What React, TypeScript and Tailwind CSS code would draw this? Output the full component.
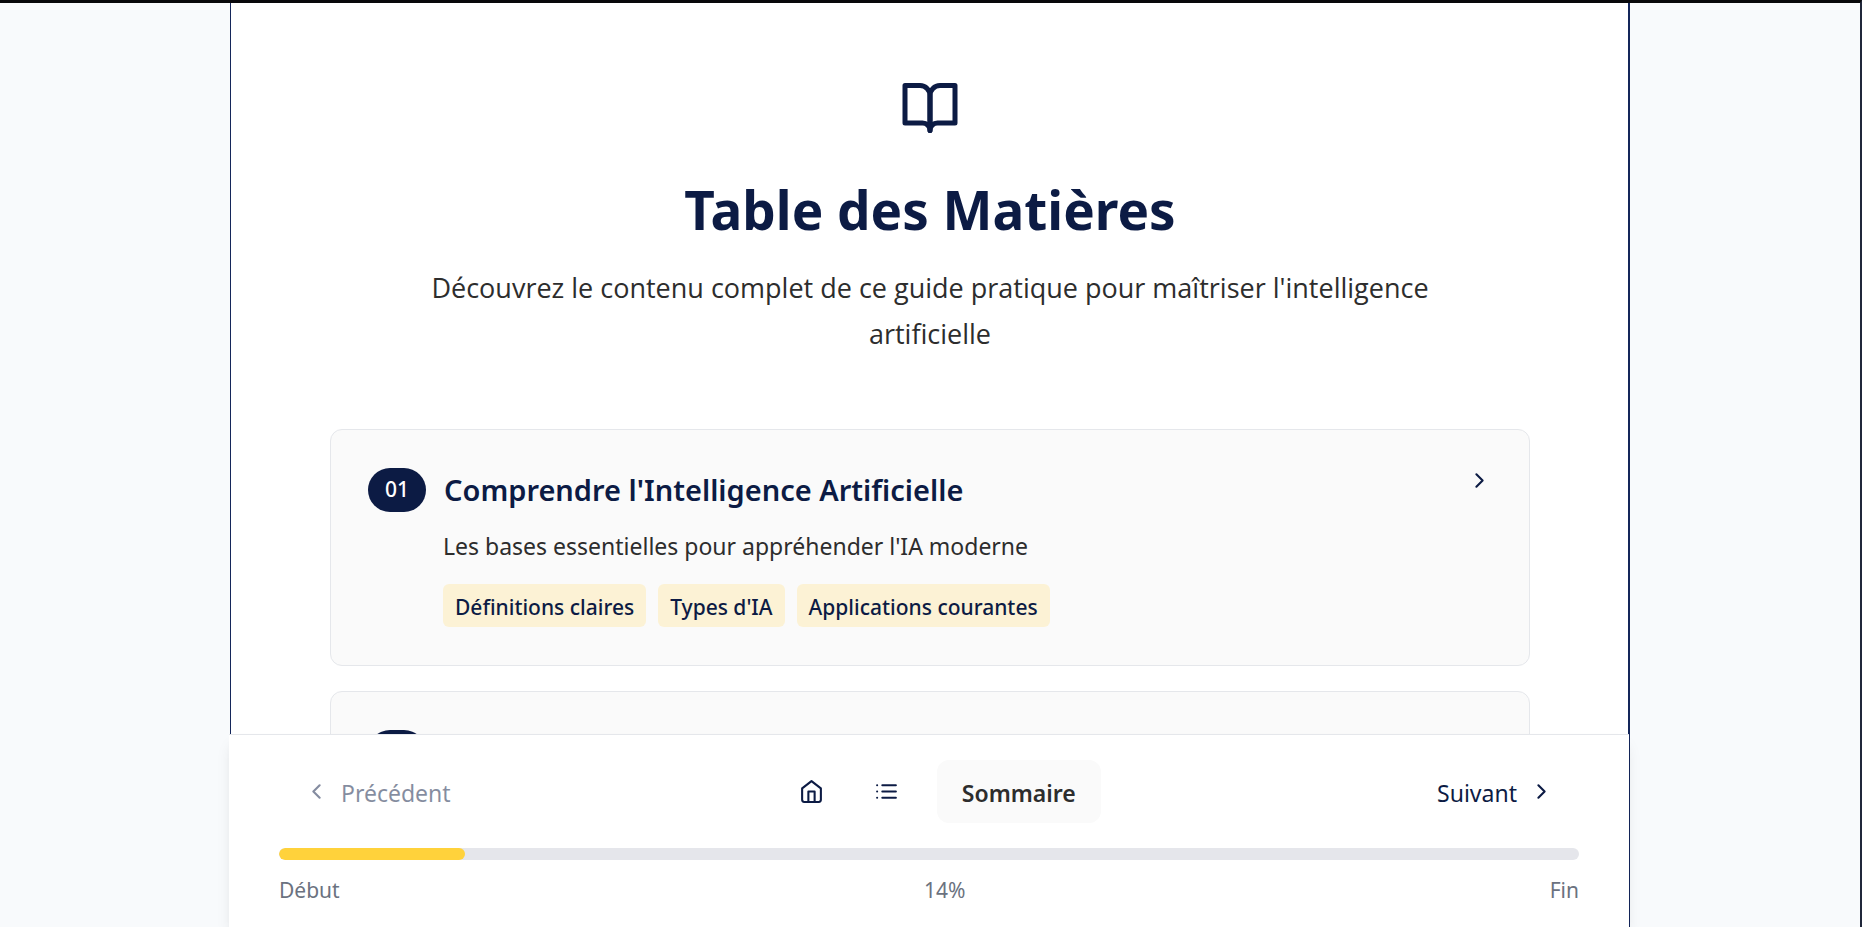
import type { ReactNode } from "react";

type IconProps = { className: string; children: ReactNode };

function Icon({ className, children }: IconProps) {
  return (
    <svg
      viewBox="0 0 24 24"
      fill="none"
      stroke="currentColor"
      strokeWidth="2"
      strokeLinecap="round"
      strokeLinejoin="round"
      aria-hidden="true"
      className={className}
    >
      {children}
    </svg>
  );
}

const ChevronRight = () => (
  <Icon className="size-[25px] shrink-0">
    <path d="m9 18 6-6-6-6" />
  </Icon>
);

const ChevronLeft = () => (
  <Icon className="size-[25px] shrink-0">
    <path d="m15 18-6-6 6-6" />
  </Icon>
);

const cardClass =
  "block rounded-xl border border-[#e5e7eb] bg-[#fafafa] px-[37px] py-[38px] text-[#0c1b44]";

const tags = ["Définitions claires", "Types d'IA", "Applications courantes"];

export default function App() {
  return (
    <div className="flex h-screen justify-center overflow-hidden border-t-[3px] border-r-2 border-t-[#08080b] border-r-[#20273a] bg-[#f8fafc] font-['Noto_Sans','Open_Sans',sans-serif] text-[#2d2d2d]">
      <div className="flex w-full max-w-[1400px] flex-col border-x border-[#14265a] bg-white">
        <main className="min-h-0 flex-1 overflow-hidden border-r border-[#14265a] pt-[75px] pr-[98px] pl-[99px]">
          <header className="mb-[72px] flex flex-col items-center text-center">
            <Icon className="size-[60px] text-[#0c1b44]">
              <path d="M2 3h6a4 4 0 0 1 4 4v14a3 3 0 0 0-3-3H2z" />
              <path d="M22 3h-6a4 4 0 0 0-4 4v14a3 3 0 0 1 3-3h7z" />
            </Icon>
            <h1 className="mt-[37px] text-[53px] leading-[70px] font-bold text-[#0c1b44]">
              Table des Matières
            </h1>
            <p className="mt-5 max-w-[1050px] font-['Open_Sans',sans-serif] text-[27px] leading-[46px]">
              Découvrez le contenu complet de ce guide pratique pour maîtriser
              l'intelligence artificielle
            </p>
          </header>

          <div className="flex flex-col gap-[25px]">
            <a href="#chapitre-1" className={cardClass}>
              <div className="flex items-start justify-between">
                <div className="flex items-center gap-[18px]">
                  <span className="flex h-11 w-[58px] items-center justify-center rounded-full bg-[#0c1b44] text-[21px] font-medium text-white">
                    01
                  </span>
                  <h2 className="text-[29px] leading-[44px] font-semibold">
                    Comprendre l'Intelligence Artificielle
                  </h2>
                </div>
                <ChevronRight />
              </div>
              <div className="pl-[75px]">
                <p className="mt-[14px] text-[23px] leading-10 text-[#2d2d2d]">
                  Les bases essentielles pour appréhender l'IA moderne
                </p>
                <ul className="mt-[18px] flex gap-3">
                  {tags.map((tag) => (
                    <li
                      key={tag}
                      className="rounded-md bg-[#fcf2d5] px-3 pt-[3px] text-[21px] leading-10 font-medium"
                    >
                      {tag}
                    </li>
                  ))}
                </ul>
              </div>
            </a>
            <a href="#chapitre-2" aria-label="02" className={cardClass}>
              <span className="block h-11 w-[58px] rounded-full bg-[#0c1b44]" />
            </a>
          </div>
        </main>

        <footer className="relative -ml-[2px] border-t border-[#e5e7eb] bg-white px-[50px] pt-[25px] pb-[21px] shadow-lg">
          <nav className="flex h-[63px] items-center justify-between text-[23px] text-[#0c1b44]">
            <button
              type="button"
              disabled
              className="flex h-full items-center gap-3 px-[25px] opacity-50"
            >
              <ChevronLeft />
              <span className="pt-[3px]">Précédent</span>
            </button>
            <div className="flex h-full items-center gap-[25px]">
              <button
                type="button"
                aria-label="Accueil"
                className="flex size-[50px] items-center justify-center"
              >
                <Icon className="size-[25px]">
                  <path d="m3 9 9-7 9 7v11a2 2 0 0 1-2 2H5a2 2 0 0 1-2-2z" />
                  <path d="M9 22V12h6v10" />
                </Icon>
              </button>
              <button
                type="button"
                aria-label="Liste"
                className="flex size-[50px] items-center justify-center"
              >
                <Icon className="size-[25px]">
                  <path d="M8 6h13M8 12h13M8 18h13M3 6h.01M3 12h.01M3 18h.01" />
                </Icon>
              </button>
              <span className="flex h-full items-center rounded-xl bg-[#fafafa] px-[25px] pt-[3px] font-semibold text-[#2d2d2d]">
                Sommaire
              </span>
            </div>
            <button
              type="button"
              className="flex h-full items-center gap-3 px-[25px]"
            >
              <span className="pt-[3px]">Suivant</span>
              <ChevronRight />
            </button>
          </nav>
          <div
            role="progressbar"
            aria-label="Progression"
            aria-valuenow={14}
            aria-valuemin={0}
            aria-valuemax={100}
            className="mt-[25px] h-3 overflow-hidden rounded-full bg-[#e5e6eb]"
          >
            <div className="h-full w-1/7 rounded-full bg-[#ffd23b]" />
          </div>
          <div className="mt-[15px] flex justify-between text-[21px] leading-[31px] text-[#6b7280]">
            <span>Début</span>
            <span>14%</span>
            <span>Fin</span>
          </div>
        </footer>
      </div>
    </div>
  );
}
